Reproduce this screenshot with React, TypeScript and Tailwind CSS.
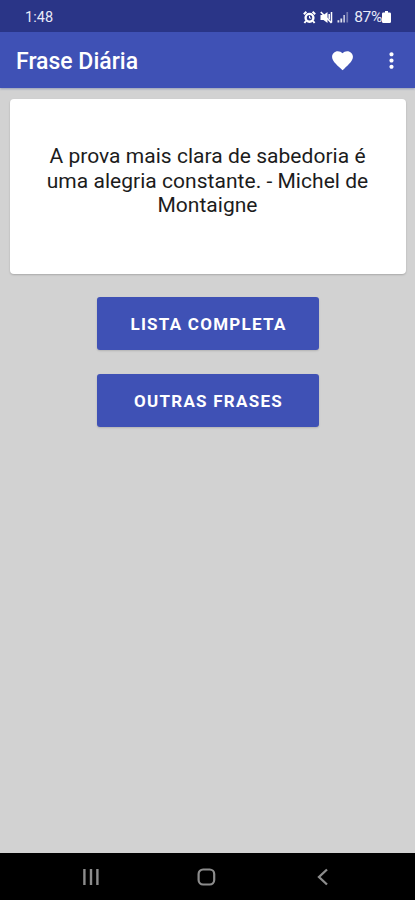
import { MdFavorite, MdMoreVert } from 'react-icons/md';

const QUOTE = ['A prova mais clara de sabedoria é', 'uma alegria constante. - Michel de', 'Montaigne'];

function AlarmIcon() {
  return (
    <svg width="13" height="13" viewBox="0 0 13 13" fill="none" stroke="#fff">
      <circle cx="6.5" cy="6.8" r="3.9" strokeWidth="2.4" />
      <path d="M.8 3.2 3.4.8M12.2 3.2 9.6.8M3 10 1.4 12M10 10 11.6 12" strokeWidth="2" />
      <path d="M6.5 4.8v2.3h1.7" strokeWidth="1" />
    </svg>
  );
}

function MuteIcon() {
  return (
    <svg width="13" height="13" viewBox="0 0 13 13" fill="none" stroke="#fff">
      <path d="M.5 4h3L7.5 1v11L3.5 9h-3z" fill="#fff" stroke="none" />
      <path d="M.8 1 11.5 12" strokeWidth="1.6" />
      <path d="M9.2 3v5.5M11.5 1v10.5" strokeWidth="1.5" />
    </svg>
  );
}

function SignalIcon() {
  return (
    <svg width="12" height="12" viewBox="0 0 12 12" fill="#fff">
      <path d="M0.5 9.3h1.8v2.2H.5zM3.4 7.5h1.8v4H3.4z" opacity=".85" />
      <path d="M6.3 4H8v7.5H6.3z" opacity=".7" />
      <path d="M9.4 1h1.7v10.5H9.4z" opacity=".35" />
    </svg>
  );
}

function BatteryIcon() {
  return (
    <svg width="9" height="12" viewBox="0 0 9 12" fill="#fff">
      <path d="M3 0h3v1.5h1.6Q9 1.5 9 2.7v8Q9 12 7.6 12H1.4Q0 12 0 10.7v-8Q0 1.5 1.4 1.5H3z" />
    </svg>
  );
}

function StatusBar() {
  return (
    <div className="flex h-8 items-center bg-[#2a3587] pr-6 pl-[25px] pt-[2px] text-[14.5px] text-[#e8eaf8]">
      <span className="pt-px tracking-[0.1px]">1:48</span>
      <div className="ml-auto flex items-center">
        <AlarmIcon />
        <span className="ml-[4px]"><MuteIcon /></span>
        <span className="ml-[4px]"><SignalIcon /></span>
        <span className="ml-[5px] pt-px text-[15.5px] tracking-[-0.3px]">87%</span>
        <BatteryIcon />
      </div>
    </div>
  );
}

function AppBar() {
  return (
    <header className="relative z-10 flex h-14 items-center bg-[#3f51b5] pt-[2px] pr-[11px] pl-[16px] text-white shadow-[0_1px_2px_rgba(60,80,140,0.4)]">
      <h1 className="pt-[2px] text-[23px] font-medium">Frase Diária</h1>
      <button className="-mt-[2px] ml-auto" aria-label="Favoritos">
        <MdFavorite size={25} />
      </button>
      <button className="-mt-[2px] ml-[24px]" aria-label="Mais opções">
        <MdMoreVert size={25} />
      </button>
    </header>
  );
}

function ActionButton({ label }: { label: string }) {
  return (
    <button className="h-[53px] w-[222px] rounded-[3px] bg-[#3f51b5] pt-[2px] pl-[2px] text-[17px] font-bold tracking-[1.25px] text-white shadow-[0_1px_2px_rgba(0,0,0,0.15)]">
      {label}
    </button>
  );
}

function NavBar() {
  return (
    <nav className="flex h-[47px] items-center justify-between bg-black pr-[82px] pl-[81px] text-[#8c8c8c]">
      <svg width="20" height="20" viewBox="0 0 20 20" stroke="currentColor" strokeWidth="2.4">
        <path d="M3.4 2v16M10 2v16M16.4 2v16" />
      </svg>
      <svg width="20" height="20" viewBox="0 0 20 20" fill="none" stroke="currentColor" strokeWidth="2.2">
        <rect x="1.6" y="2.5" width="15.6" height="15" rx="4.5" />
      </svg>
      <svg width="20" height="20" viewBox="0 0 20 20" fill="none" stroke="currentColor" strokeWidth="2.3">
        <path d="M14 2.5 6 10l8 7.5" />
      </svg>
    </nav>
  );
}

export default function App() {
  return (
    <div className="flex h-[900px] w-[415px] flex-col overflow-hidden bg-[#d2d2d2] font-[Roboto,sans-serif]">
      <StatusBar />
      <AppBar />

      <main className="flex flex-1 flex-col items-center pt-[11px]">
        <div className="h-[175px] w-[396px] rounded bg-white pt-[45px] text-center text-[21px] leading-[24.5px] tracking-[0.03px] text-[#1c1c1c] shadow-[0_1px_2px_rgba(0,0,0,0.2)]">
          {QUOTE.map((line) => (
            <p key={line} className="whitespace-nowrap">{line}</p>
          ))}
        </div>

        <div className="mt-[23px] flex flex-col gap-6">
          <ActionButton label="LISTA COMPLETA" />
          <ActionButton label="OUTRAS FRASES" />
        </div>
      </main>

      <NavBar />
    </div>
  );
}
